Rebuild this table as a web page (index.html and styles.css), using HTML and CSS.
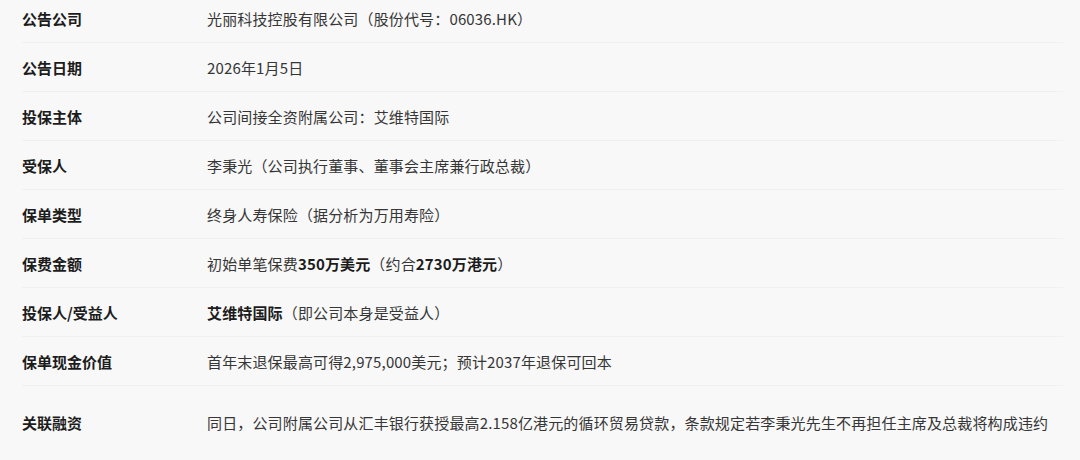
FILE: index.html
```html
<!DOCTYPE html>
<html lang="zh-CN">
<head>
<meta charset="utf-8">
<link rel="stylesheet" href="styles.css">
</head>
<body>
<div class="sheet">
  <div class="row"><div class="label">公告公司</div><div class="value">光丽科技控股有限公司（股份代号：06036.HK）</div></div>
  <div class="row"><div class="label">公告日期</div><div class="value">2026年1月5日</div></div>
  <div class="row"><div class="label">投保主体</div><div class="value">公司间接全资附属公司：艾维特国际</div></div>
  <div class="row"><div class="label">受保人</div><div class="value">李秉光（公司执行董事、董事会主席兼行政总裁）</div></div>
  <div class="row"><div class="label">保单类型</div><div class="value">终身人寿保险（据分析为万用寿险）</div></div>
  <div class="row"><div class="label">保费金额</div><div class="value">初始单笔保费<b>350万美元</b>（约合<b>2730万港元</b>）</div></div>
  <div class="row"><div class="label">投保人/受益人</div><div class="value"><b>艾维特国际</b>（即公司本身是受益人）</div></div>
  <div class="row"><div class="label">保单现金价值</div><div class="value">首年末退保最高可得2,975,000美元；预计2037年退保可回本</div></div>
  <div class="row row-last"><div class="label">关联融资</div><div class="value">同日，公司附属公司从汇丰银行获授最高2.158亿港元的循环贸易贷款，条款规定若李秉光先生不再担任主席及总裁将构成违约</div></div>
</div>
</body>
</html>
```
FILE: styles.css
```css
html, body {
  margin: 0;
  padding: 0;
  background: #f8f8f8;
}
body {
  font-family: "Noto Sans CJK SC", "Noto Sans", sans-serif;
  font-size: 15px;
  color: #333;
  overflow: hidden;
}
.sheet {
  margin: -6px 17px 0 22px;
  display: flex;
  flex-direction: column;
}
.row {
  display: grid;
  grid-template-columns: 185px 1fr;
  align-items: center;
  height: 48px;
  border-bottom: 1px solid #f0f0f0;
}
.row-last {
  height: 72px;
  border-bottom: none;
}
.label {
  font-weight: 700;
  color: #1c1c1c;
}
.value {
  color: #363636;
  white-space: nowrap;
  letter-spacing: 0.15px;
}
.value b {
  font-weight: 700;
  color: #1c1c1c;
}
```
